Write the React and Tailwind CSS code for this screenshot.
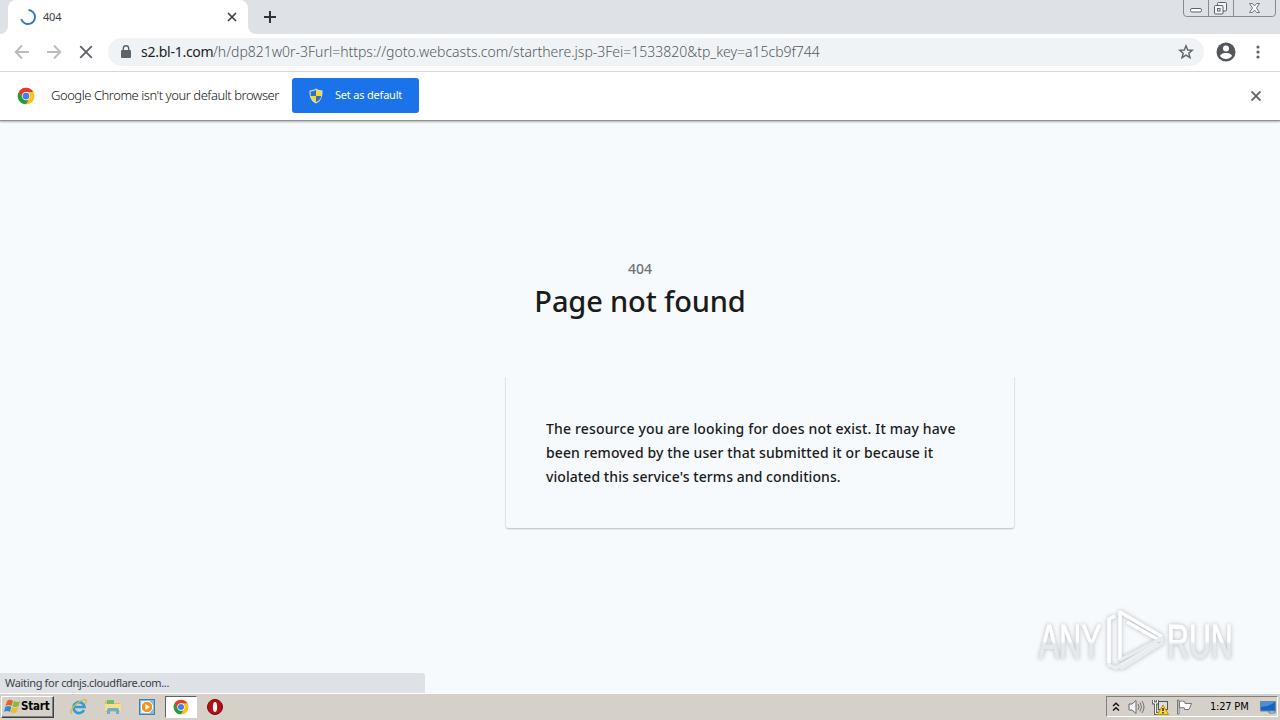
import React from 'react';

function ChromeLogo({ size }) {
  return (
    <svg width={size} height={size} viewBox="0 0 48 48" className="shrink-0">
      <circle cx="24" cy="24" r="22" fill="#fbc116" />
      <path d="M24 13 H43.1 A22 22 0 0 1 24 46 L33.5 29.5 Z" fill="#fbc116" />
      <path d="M24 13 H43.1 A22 22 0 0 0 4.9 13 L14.5 29.5 Z" fill="#e33b2e" />
      <path d="M4.9 13 L14.5 29.5 L24 35 H30.3 L24 46 A22 22 0 0 1 4.9 13 Z" fill="#249a41" />
      <circle cx="24" cy="24" r="11" fill="#fff" />
      <circle cx="24" cy="24" r="9" fill="#3f7fe8" />
    </svg>
  );
}

function ShieldIcon() {
  return (
    <svg width="16" height="16" viewBox="0 0 16 16">
      <path d="M8 .5 C6 2 3.5 2.4 1.5 2.4 C1.3 9 3 13 8 15.5 C13 13 14.7 9 14.5 2.4 C12.5 2.4 10 2 8 .5Z" fill="#d6dde3" />
      <path d="M8 1.8 C6.3 3 4.5 3.4 2.6 3.5 L2.7 8 H8Z" fill="#2c72bd" />
      <path d="M8 1.8 C9.7 3 11.5 3.4 13.4 3.5 L13.3 8 H8Z" fill="#fbd72c" />
      <path d="M2.7 8 H8 V14.3 C5 12.7 3.2 10.8 2.7 8Z" fill="#fbd72c" />
      <path d="M13.3 8 H8 V14.3 C11 12.7 12.8 10.8 13.3 8Z" fill="#2c72bd" />
    </svg>
  );
}

function TabStrip() {
  return (
    <div className="flex h-[34px] shrink-0 bg-[#dee1e6]">
      <svg width="8" height="34" viewBox="0 0 8 34">
        <path d="M8 26 A8 8 0 0 1 0 34 H8Z" fill="#fff" />
      </svg>
      <div className="flex h-[34px] w-[240px] items-center rounded-t-lg bg-white pl-3 pr-[11px]">
        <svg width="16" height="16" viewBox="0 0 16 16" fill="none" className="shrink-0">
          <path d="M8.5 1 A7 7 0 1 1 1.3 10" stroke="#3474c8" strokeWidth="1.9" />
        </svg>
        <span className="ml-[7px] flex-1 text-[11px] leading-4 tracking-[-0.2px] text-[#3c4043]">404</span>
        <svg width="10" height="10" viewBox="0 0 10 10" stroke="#3c4043" strokeWidth="1.7">
          <path d="M1 1 L9 9 M9 1 L1 9" />
        </svg>
      </div>
      <svg width="8" height="34" viewBox="0 0 8 34">
        <path d="M0 26 A8 8 0 0 0 8 34 H0Z" fill="#fff" />
      </svg>
      <svg width="12" height="12" viewBox="0 0 12 12" stroke="#303236" strokeWidth="2" className="ml-2 mt-[11px]">
        <path d="M6 0 V12 M0 6 H12" />
      </svg>
      <svg width="94" height="17" viewBox="0 0 94 17" fill="none" className="ml-auto mr-[3px]">
        <path d="M.5 0 V13 Q.5 16.5 3.5 16.5 H89.5 Q92.5 16.5 92.5 13 V0 M25.5 0 V16 M50.5 0 V16" stroke="#858a94" />
        <rect x="7.5" y="8.5" width="11" height="3.5" rx="1.5" fill="#fff" stroke="#5c616b" />
        <rect x="34.5" y="2.5" width="9" height="8.5" rx="1" fill="#f4f5f7" stroke="#5c616b" />
        <rect x="31.5" y="5.5" width="8.5" height="8.5" rx="1" fill="#f4f5f7" stroke="#5c616b" />
        <rect x="34.5" y="8.5" width="2.5" height="2.5" stroke="#5c616b" />
        <path d="M66.5 3.5 H69.5 L71.5 6 L73.5 3.5 H76.5 L73.5 8 L76.5 12.5 H73.5 L71.5 10 L69.5 12.5 H66.5 L69.5 8Z" fill="#f7f8fa" stroke="#737882" />
      </svg>
    </div>
  );
}

function Toolbar() {
  return (
    <div className="flex h-[38px] shrink-0 items-center border-b border-[#d9dbde] bg-white pb-px pl-[14px] pr-[13px]">
      <svg width="16" height="16" viewBox="0 0 16 16" stroke="#babcbe" strokeWidth="1.9" fill="none">
        <path d="M15 8 H2 M8 1.5 L1.7 8 L8 14.5" />
      </svg>
      <svg width="16" height="16" viewBox="0 0 16 16" stroke="#babcbe" strokeWidth="1.9" fill="none" className="ml-4">
        <path d="M1 8 H14 M8 1.5 L14.3 8 L8 14.5" />
      </svg>
      <svg width="14" height="14" viewBox="0 0 14 14" stroke="#5f6368" strokeWidth="1.9" className="ml-[17px]">
        <path d="M1.2 1.2 L12.8 12.8 M12.8 1.2 L1.2 12.8" />
      </svg>
      <div className="ml-[15px] flex h-7 w-[1096px] items-center rounded-full bg-[#f0f3f5] pl-[13px] pr-[10px]">
        <svg width="10" height="14" viewBox="0 0 10 14" fill="none" className="shrink-0">
          <path d="M2.3 6 V3.5 A2.7 2.7 0 0 1 7.7 3.5 V6" stroke="#5f6368" strokeWidth="1.4" />
          <rect x="0" y="5" width="10" height="8" rx="1" fill="#5f6368" />
        </svg>
        <div className="ml-[10px] flex flex-1 whitespace-nowrap text-[14px] leading-5 text-[#55595e]">
          <span className="w-[72px] tracking-[-0.26px] text-[#202124]">s2.bl-1.com</span>
          <span className="font-light tracking-[-0.01px]">/h/dp821w0r-3Furl=https://goto.webcasts.com/starthere.jsp-3Fei=1533820&amp;tp_key=a15cb9f744</span>
        </div>
        <svg width="16" height="16" viewBox="0 0 16 16" fill="none" stroke="#5f6368" strokeWidth="1.4">
          <path d="M8 1.8 L9.7 6 L14.3 6.3 L10.8 9.2 L12 13.7 L8 11.2 L4 13.7 L5.2 9.2 L1.7 6.3 L6.3 6Z" />
        </svg>
      </div>
      <svg width="20" height="20" viewBox="0 0 20 20" className="ml-3">
        <circle cx="10" cy="10" r="9.5" fill="#53575c" />
        <circle cx="10" cy="6.5" r="3" fill="#fff" />
        <path d="M4 14 C5 11.4 8 11 10 11 S15 11.4 16 14 C14.5 16 12.5 17 10 17 S5.5 16 4 14Z" fill="#fff" />
      </svg>
      <svg width="4" height="14" viewBox="0 0 4 14" fill="#5f6368" className="ml-auto mr-[7px]">
        <circle cx="2" cy="2" r="1.6" />
        <circle cx="2" cy="7" r="1.6" />
        <circle cx="2" cy="12" r="1.6" />
      </svg>
    </div>
  );
}

function DefaultBrowserBar() {
  return (
    <div className="z-10 flex h-[49px] shrink-0 items-center border-b border-[#8e9193] bg-white pb-px pl-[17px] pr-[19px] shadow-[0_1px_2px_#aeb2b5]">
      <ChromeLogo size={18} />
      <span className="mb-px ml-4 w-[241px] whitespace-nowrap text-[13px] font-light leading-5 tracking-[-0.46px] text-[#111315]">Google Chrome isn't your default browser</span>
      <button className="flex h-[35px] w-[127px] items-center rounded-[3px] bg-[#1a73e8] pl-4 text-[11px] text-white">
        <ShieldIcon />
        <span className="ml-[11px] whitespace-nowrap tracking-[-0.2px]">Set as default</span>
      </button>
      <svg width="10" height="10" viewBox="0 0 10 10" stroke="#5f6368" strokeWidth="1.9" className="ml-auto">
        <path d="M.5 .5 L9.5 9.5 M9.5 .5 L.5 9.5" />
      </svg>
    </div>
  );
}

function Watermark() {
  return (
    <svg width="220" height="70" viewBox="0 0 220 70" className="absolute bottom-[15px] right-[24px] drop-shadow-[0_0_2px_#b4b8bb]">
      <defs>
        <linearGradient id="fade" x1="0" y1="0" x2="0" y2="1">
          <stop offset="0.5" stopColor="#ffffff" />
          <stop offset="0.55" stopColor="#e6e9eb" />
        </linearGradient>
      </defs>
      <g fill="url(#fade)" stroke="url(#fade)" fontFamily="'Liberation Sans Narrow', 'Liberation Sans', sans-serif" fontSize="49">
        <text transform="translate(3 50) scale(0.62 1)">ANY</text>
        <text transform="translate(131 50) scale(0.62 1)">RUN</text>
      </g>
      <g fill="none" stroke="#fff" strokeWidth="3.5" strokeLinejoin="round">
        <path d="M79 8 L73 11 V57 L80 60 L122 35" stroke="#edf0f1" />
        <path d="M79 8 L73 11 V55" />
        <path d="M84 52 V4 L125 28 L123 32 L91 14" />
        <path d="M84 52 L126 30 V35 L86 60 L82 57" stroke="#e9ecee" />
      </g>
    </svg>
  );
}

function PageContent() {
  return (
    <main className="relative flex min-h-0 flex-1 flex-col items-center bg-[#f6fafd] pt-[136px] font-['Noto_Sans',sans-serif] text-[#1b1b1b]">
      <p className="text-[14px] font-medium leading-6 text-[#737373]">404</p>
      <h1 className="whitespace-nowrap text-[29px] font-medium leading-10 tracking-[-0.15px]">Page not found</h1>
      <div className="ml-[240px] mt-[56px] h-[152px] w-[510px] rounded-b-sm border-x border-b border-x-[#e0e4e8] border-b-[#c5cace] px-10 pt-10 shadow-[0_1px_1px_#e5e9ec]">
        <p className="whitespace-nowrap text-[14px] font-medium leading-6">
          <span className="tracking-[0.16px]">The resource you are looking for does not exist. It may have</span><br />
          <span className="tracking-[0.11px]">been removed by the user that submitted it or because it</span><br />
          <span className="tracking-[0.07px]">violated this service's terms and conditions.</span>
        </p>
      </div>
      <Watermark />
      <div className="absolute bottom-0 left-0 h-5 w-[425px] rounded-tr-[3px] bg-[#dee1e6] pl-[5px] text-[11px] leading-5 tracking-[-0.33px] text-[#3c4043]">Waiting for cdnjs.cloudflare.com...</div>
    </main>
  );
}

function Taskbar() {
  return (
    <div className="flex h-[27px] shrink-0 items-center border-t border-white bg-[#d5d0c8] pb-px font-['DejaVu_Sans_Condensed','DejaVu_Sans',sans-serif] text-black">
      <button className="ml-px flex h-[22px] w-[53px] items-center border border-b-[#404040] border-l-white border-r-[#404040] border-t-white pl-[2px] font-bold shadow-[inset_-1px_-1px_#808080]">
        <svg width="17" height="17" viewBox="0 0 17 17" className="shrink-0">
          <path d="M3 3 Q6 .5 9 3 L7.5 8 Q4 6 1.5 8Z" fill="#e8602c" />
          <path d="M10 3 Q13 5 16 3 L14.5 8 Q11 10 8.5 8Z" fill="#86b93b" />
          <path d="M1.2 9 Q4.5 7 7.2 9 L6 14 Q3 12 0 14Z" fill="#328bc9" />
          <path d="M8 9 Q11 11 14.2 9 L12.5 14 Q9.5 16 6.8 14Z" fill="#f3b82c" />
        </svg>
        <span className="mt-px text-[11.5px] tracking-[-0.2px]">Start</span>
      </button>
      <svg width="18" height="18" viewBox="0 0 18 18" fill="none" className="ml-4">
        <path d="M14 12 A5.5 5.5 0 1 1 14.5 9 H4.5" stroke="#2f9ed8" strokeWidth="2.6" />
        <path d="M2 15 C-2 16 4 5 13 2 C17 .8 17 3 15 6" stroke="#d9b64a" strokeWidth="1.3" />
      </svg>
      <svg width="18" height="18" viewBox="0 0 18 18" className="ml-4">
        <path d="M1 3 H6 L8 5 H16 V14 H1Z" fill="#e7bf52" />
        <path d="M3 2 H10 V7 H3Z" fill="#6dbb78" />
        <path d="M1 6 H17 V13 H1Z" fill="#f8df8c" />
        <path d="M3 16 V12 Q3 10 5 10 H13 Q15 10 15 12 V16 H12 V13 H6 V16Z" fill="#69afd3" />
      </svg>
      <svg width="16" height="16" viewBox="0 0 16 16" className="ml-[17px]">
        <rect x=".5" y=".5" width="15" height="15" fill="#82bce2" stroke="#437fae" />
        <rect x="2" y="2" width="9" height="12" fill="#d9effa" />
        <circle cx="8" cy="8" r="5.7" fill="#ee9221" stroke="#fff" />
        <path d="M6.5 5 L11 8 L6.5 11Z" fill="#fff" />
      </svg>
      <div className="ml-[10px] flex h-[22px] w-[32px] items-center justify-center border border-b-white border-l-[#606060] border-r-white border-t-[#606060] bg-white">
        <ChromeLogo size={16} />
      </div>
      <svg width="16" height="16" viewBox="0 0 16 16" className="ml-[10px]">
        <circle cx="8" cy="8" r="7.5" fill="#b80c16" stroke="#6e0a10" />
        <ellipse cx="8" cy="8" rx="2.1" ry="5" fill="#fff" />
      </svg>
      <div className="ml-auto mr-[2px] flex h-[21px] w-[172px] items-center border border-b-white border-l-[#808080] border-r-white border-t-[#808080] pl-[5px]">
        <svg width="8" height="10" viewBox="0 0 8 10" fill="none" stroke="#111" strokeWidth="1.4">
          <path d="M1 4 L4 1.2 L7 4 M1 8.5 L4 5.7 L7 8.5" />
        </svg>
        <svg width="17" height="16" viewBox="0 0 17 16" fill="none" className="ml-2">
          <path d="M1 5 H4 L8 1.5 V14.5 L4 11 H1Z" fill="#f5f5f5" stroke="#696969" />
          <path d="M10 5 Q12 8 10 11 M12 3.5 Q15 8 12 12.5 M14 2 Q18 8 14 14" stroke="#747474" />
        </svg>
        <svg width="17" height="16" viewBox="0 0 17 16" fill="none" className="ml-[7px]">
          <path d="M1.5 1 V4 H5.5 V1 M3.5 4 V14.5 H7" stroke="#666" strokeWidth="3" />
          <path d="M1.5 1 V4 H5.5 V1 M3.5 4 V14.5 H7" stroke="#fff" />
          <rect x="6.5" y="2.5" width="9" height="8" fill="#ddd" stroke="#555" />
          <path d="M11 6 L16.5 15.5 H5.5Z" fill="#ffd72a" stroke="#b89211" />
          <path d="M11 9 V12 M11 13 V14.5" stroke="#111" strokeWidth="1.3" />
        </svg>
        <svg width="17" height="16" viewBox="0 0 17 16" className="ml-[7px]">
          <path d="M1.5 1 H3 V15 H1.5Z" fill="#fff" stroke="#777" />
          <path d="M3.5 2.5 Q6 1 9 3 V4.5 H15.5 L13 10.5 H8.5 V9 Q6 8 3.5 9Z" fill="#fff" stroke="#777" />
        </svg>
        <span className="ml-[17px] mt-[2px] w-[41px] whitespace-nowrap text-[11px] tracking-[-0.2px]">1:27 PM</span>
        <svg width="16" height="14" viewBox="0 0 16 14" className="ml-[9px]">
          <path d="M.5 1.5 H15.5 V11 H.5Z" fill="#1765be" stroke="#668aa8" />
          <path d="M1 7 Q8 7 15 2 V2 H1Z" fill="#498fda" />
          <path d="M9 11 H15 V13 H9Z" fill="#dbe8ee" stroke="#52789a" />
        </svg>
      </div>
    </div>
  );
}

export default function App() {
  return (
    <div className="flex h-[720px] w-[1280px] flex-col overflow-hidden font-['Noto_Sans','Open_Sans',sans-serif] antialiased">
      <TabStrip />
      <Toolbar />
      <DefaultBrowserBar />
      <PageContent />
      <Taskbar />
    </div>
  );
}
